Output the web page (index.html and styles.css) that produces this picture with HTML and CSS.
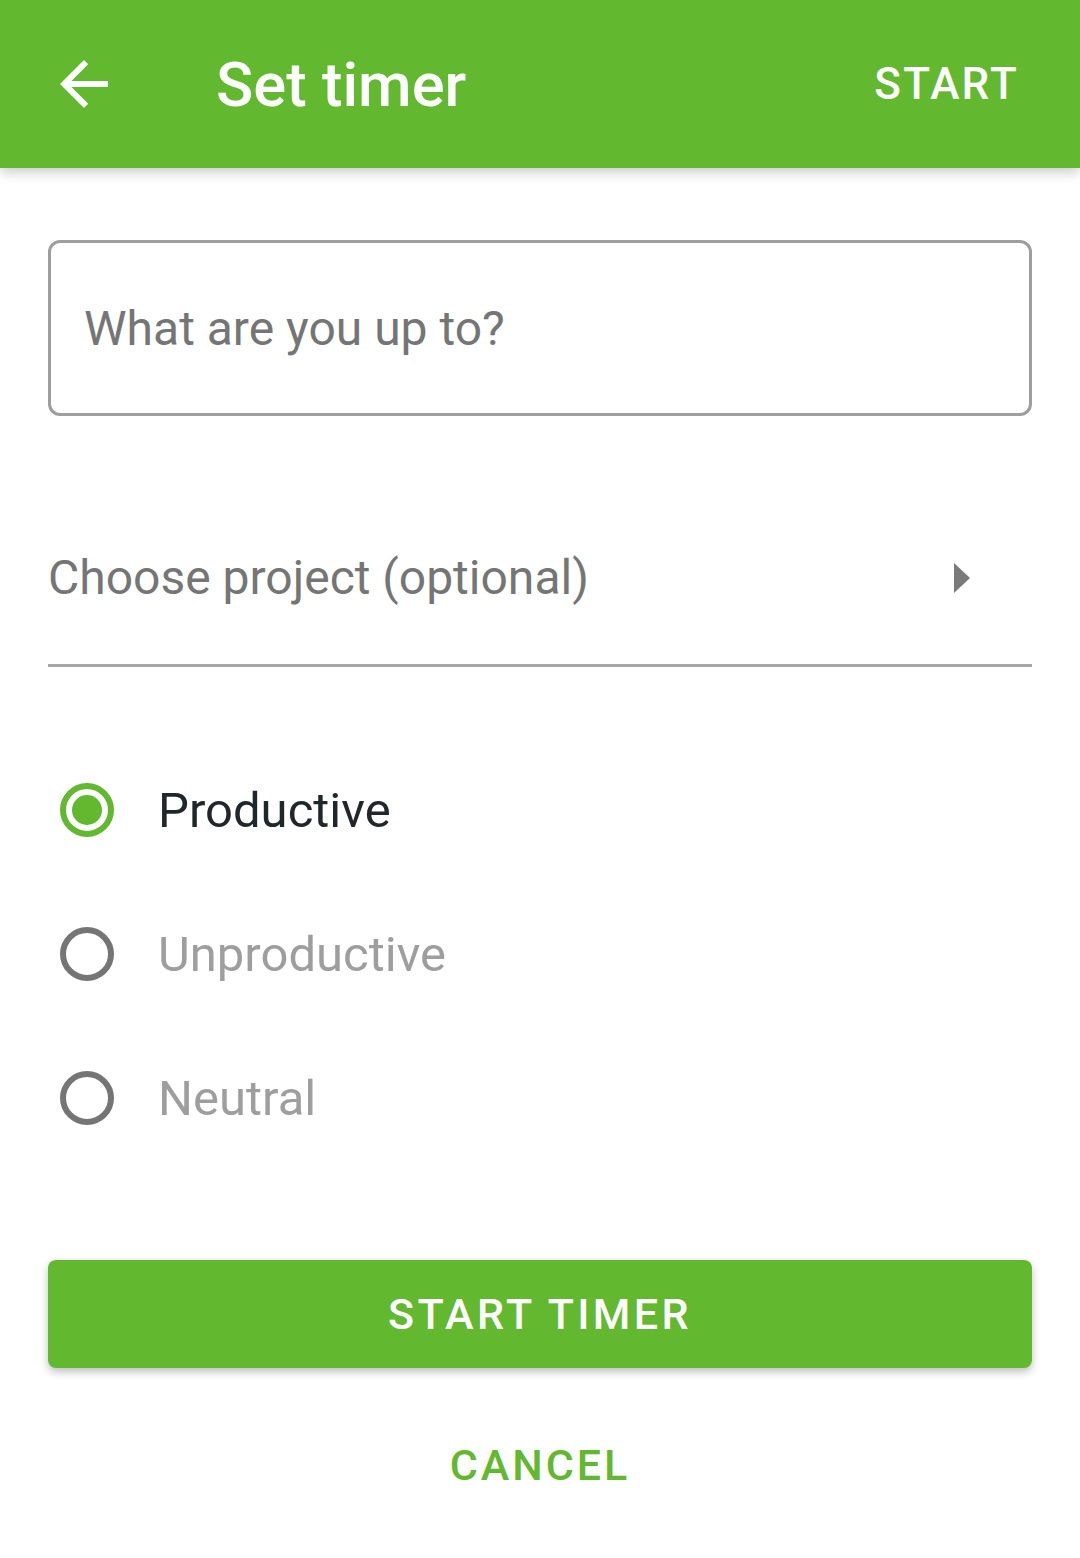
FILE: index.html
```html
<!DOCTYPE html>
<html>
<head>
<meta charset="utf-8">
<link rel="stylesheet" href="styles.css">
</head>
<body>
<header class="appbar">
  <button class="nav-btn" aria-label="Back">
    <svg class="back-icon" viewBox="0 0 24 24" width="72" height="72">
      <path d="M20 11H7.83l5.59-5.59L12 4l-8 8 8 8 1.41-1.41L7.83 13H20v-2z" fill="#ffffff"/>
    </svg>
  </button>
  <h1 class="title">Set timer</h1>
  <span class="action">START</span>
</header>
<main class="content">
  <div class="text-field">
    <span class="placeholder">What are you up to?</span>
  </div>
  <div class="project-select">
    <span class="project-label">Choose project (optional)</span>
    <svg class="caret" viewBox="0 0 16 30" width="16" height="30">
      <polygon points="0,0 16,15 0,30" fill="#7a7a7a"/>
    </svg>
  </div>
  <div class="radio-group">
    <div class="radio-row">
      <span class="radio checked"><span class="dot"></span></span>
      <span class="radio-label active">Productive</span>
    </div>
    <div class="radio-row">
      <span class="radio"></span>
      <span class="radio-label">Unproductive</span>
    </div>
    <div class="radio-row">
      <span class="radio"></span>
      <span class="radio-label">Neutral</span>
    </div>
  </div>
  <button class="primary-btn">START TIMER</button>
  <button class="text-btn">CANCEL</button>
</main>
</body>
</html>
```
FILE: styles.css
```css
html, body {
  margin: 0;
  padding: 0;
  background: #ffffff;
  font-family: Roboto, "Noto Sans", sans-serif;
}
.appbar {
  height: 168px;
  background: #62b82f;
  display: flex;
  align-items: center;
  box-shadow: 0 4px 12px rgba(0, 0, 0, 0.22);
  position: relative;
  z-index: 1;
}
.nav-btn {
  background: none;
  border: 0;
  padding: 0;
  margin: 0 0 0 48px;
  width: 72px;
  height: 72px;
  display: flex;
}
.title {
  margin: 4px 0 0 96px;
  flex: 1;
  color: #ffffff;
  font-size: 61.5px;
  font-weight: 500;
  line-height: 1;
}
.action {
  color: #ffffff;
  font-size: 44px;
  font-weight: 500;
  letter-spacing: 2.2px;
  margin-right: 61px;
}
.content {
  padding: 72px 48px 0 48px;
  display: flex;
  flex-direction: column;
}
.text-field {
  height: 170px;
  border: 3px solid #9e9e9e;
  border-radius: 12px;
  display: flex;
  align-items: center;
  padding-left: 33px;
}
.placeholder {
  color: #757575;
  font-size: 48px;
}
.project-select {
  margin-top: 106px;
  height: 145px;
  border-bottom: 3px solid #a6a6a6;
  display: flex;
  align-items: flex-start;
  justify-content: space-between;
  padding-top: 24px;
  box-sizing: border-box;
}
.project-label {
  color: #757575;
  font-size: 48px;
  line-height: 64px;
}
.caret {
  margin: 17px 62px 0 0;
}
.radio-group {
  margin-top: 71px;
  display: flex;
  flex-direction: column;
}
.radio-row {
  height: 144px;
  display: flex;
  align-items: center;
}
.radio {
  width: 42px;
  height: 42px;
  border: 6px solid #757575;
  border-radius: 50%;
  margin-left: 12px;
  display: flex;
  align-items: center;
  justify-content: center;
  flex: none;
}
.radio.checked {
  border-color: #62b82f;
}
.dot {
  width: 30px;
  height: 30px;
  border-radius: 50%;
  background: #62b82f;
}
.radio-label {
  margin-left: 44px;
  font-size: 49px;
  color: #9e9e9e;
  margin-top: 1px;
}
.radio-label.active {
  color: #20272b;
}
.primary-btn {
  margin-top: 90px;
  height: 108px;
  border: 0;
  border-radius: 8px;
  background: #62b82f;
  color: #ffffff;
  font-family: Roboto, "Noto Sans", sans-serif;
  font-size: 43px;
  font-weight: 500;
  letter-spacing: 3.4px;
  box-shadow: 0 4px 8px rgba(0, 0, 0, 0.25);
}
.text-btn {
  margin-top: 43px;
  height: 108px;
  border: 0;
  background: none;
  color: #62b82f;
  font-family: Roboto, "Noto Sans", sans-serif;
  font-size: 43px;
  font-weight: 500;
  letter-spacing: 3px;
}
```
